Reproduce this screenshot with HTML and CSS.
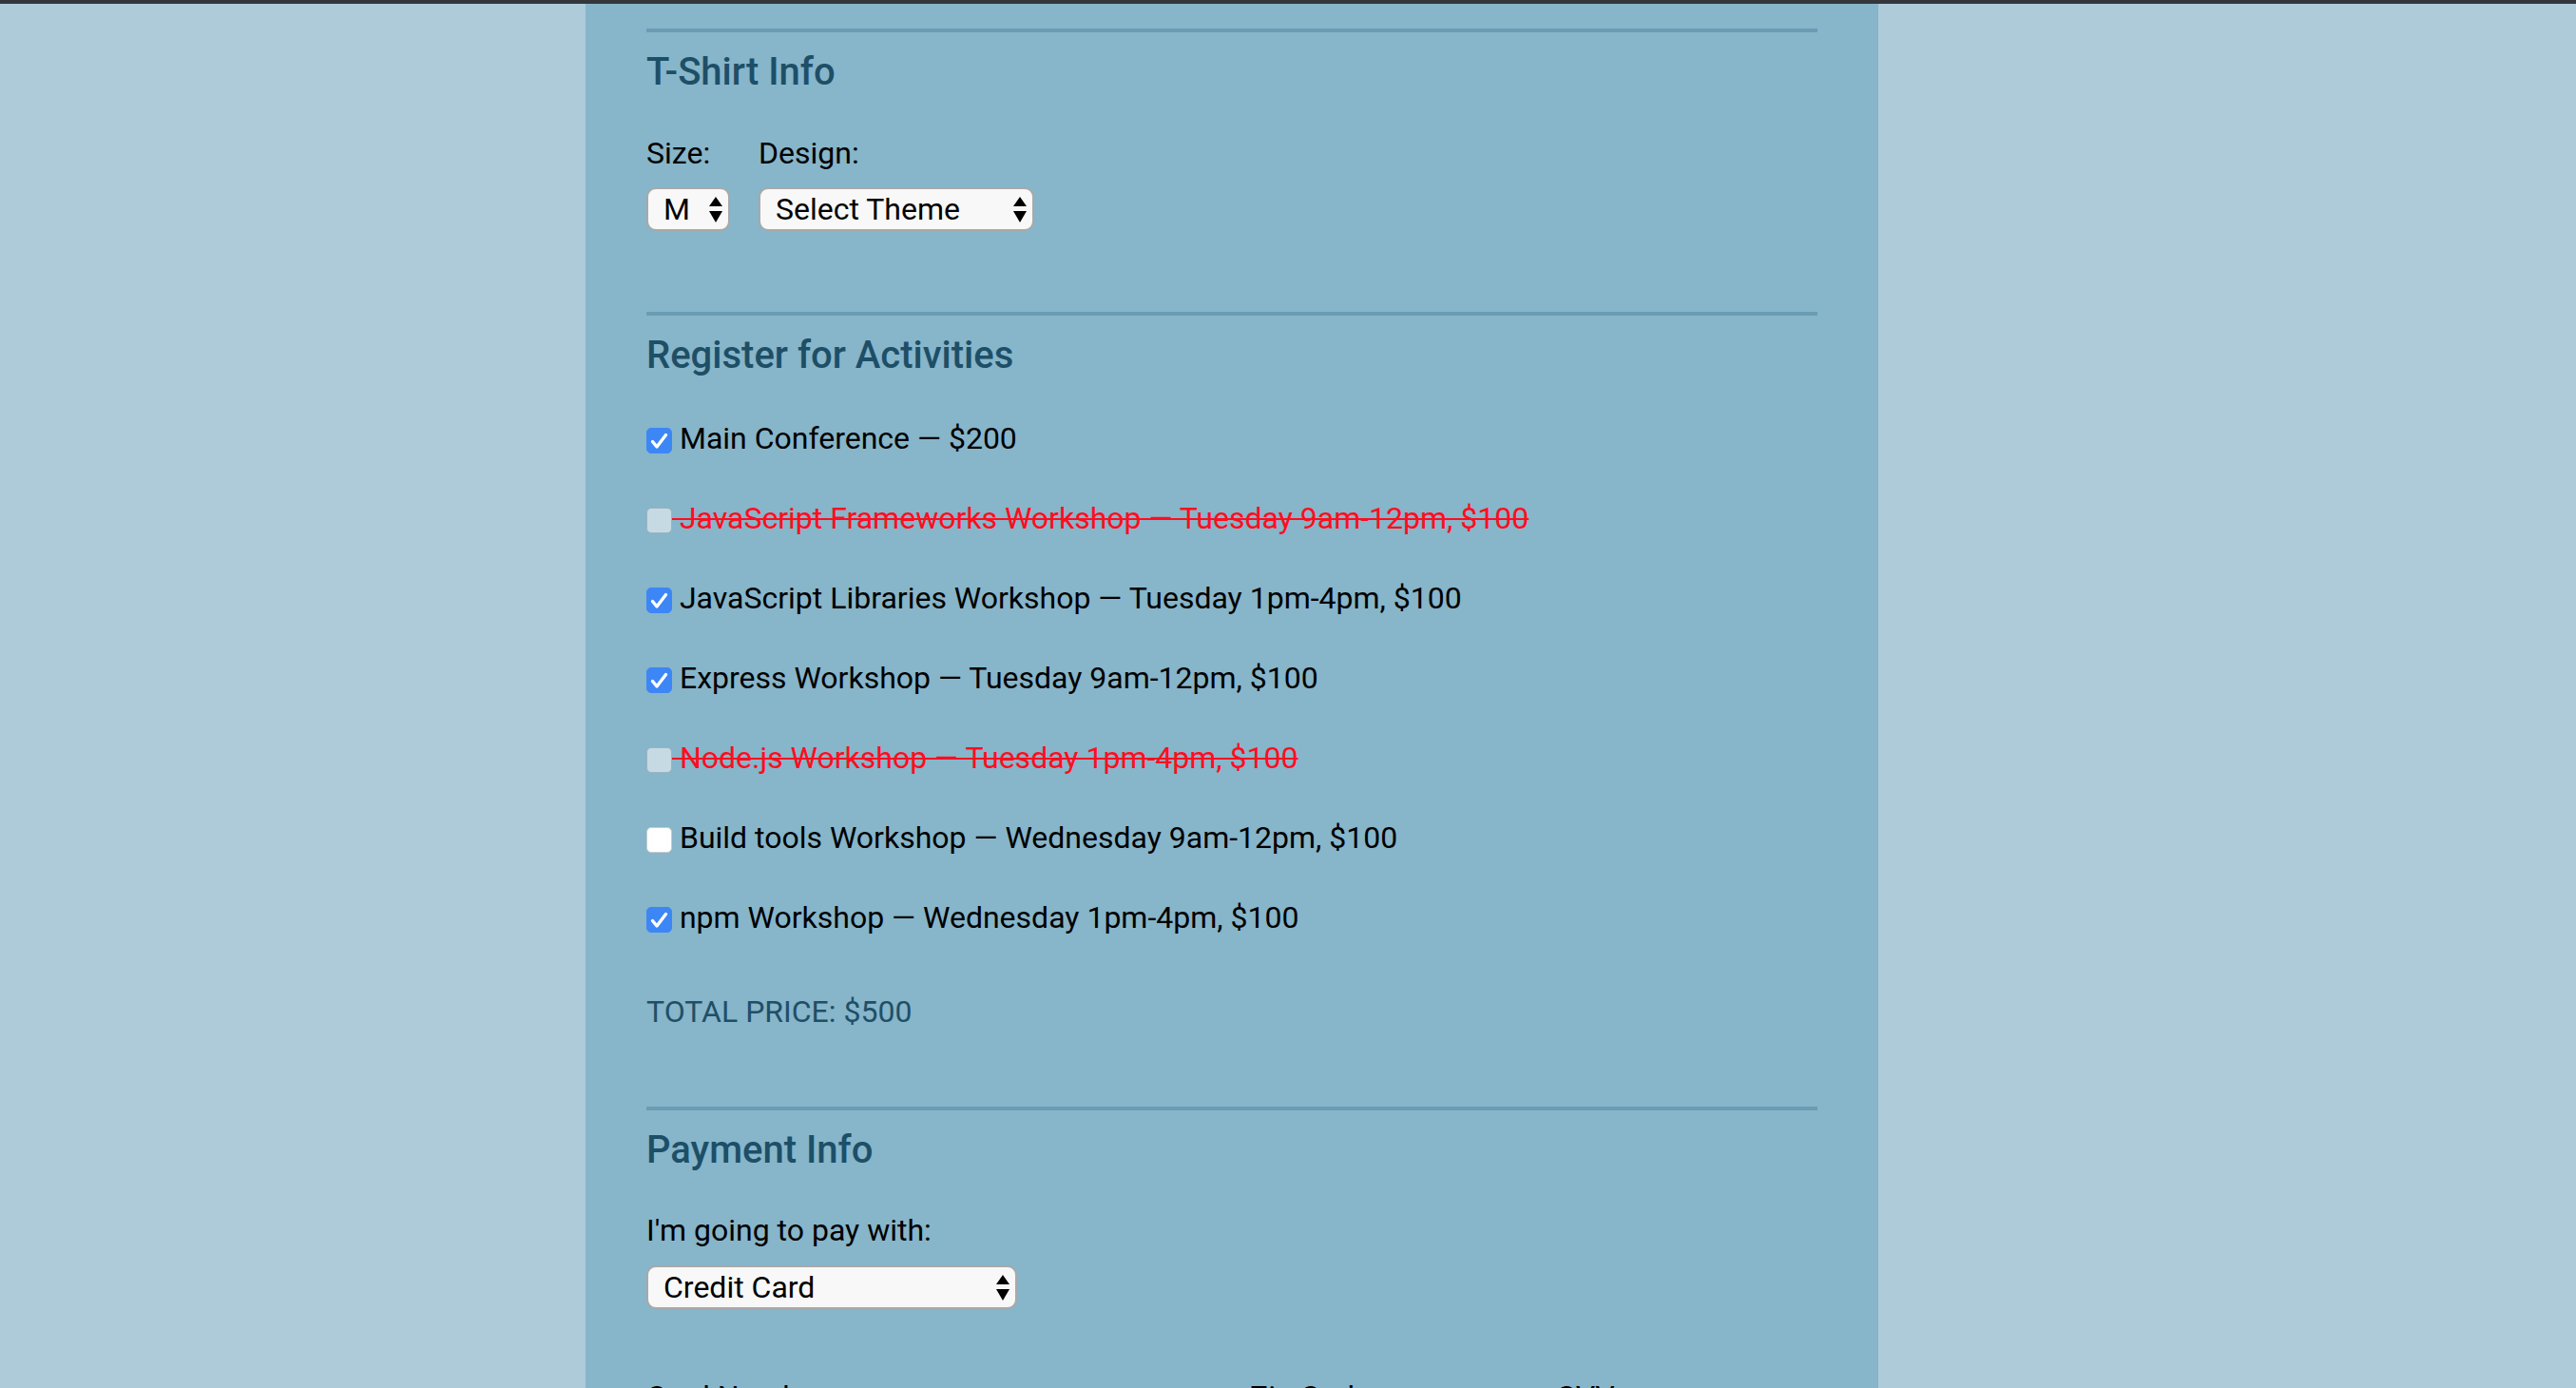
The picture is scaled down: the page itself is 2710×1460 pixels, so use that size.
FILE: index.html
```html
<!DOCTYPE html>
<html lang="en">
<head>
<meta charset="utf-8">
<title>Conference Registration</title>
<link rel="stylesheet" href="styles.css">
</head>
<body>
<div class="topbar"></div>
<main class="page">
  <form class="form">
    <section class="group">
      <h2 class="group-title">T-Shirt Info</h2>
      <div class="shirt-row">
        <div class="field">
          <label class="field-label" for="size">Size:</label>
          <div class="select-wrap select-size">
            <select id="size" class="select"><option>M</option></select>
            <svg class="select-arrows" viewBox="0 0 14 28" width="14" height="28"><polygon points="0,10 7,0 14,10"/><polygon points="0,15 14,15 7,27"/></svg>
          </div>
        </div>
        <div class="field">
          <label class="field-label" for="design">Design:</label>
          <div class="select-wrap select-design">
            <select id="design" class="select"><option>Select Theme</option></select>
            <svg class="select-arrows" viewBox="0 0 14 28" width="14" height="28"><polygon points="0,10 7,0 14,10"/><polygon points="0,15 14,15 7,27"/></svg>
          </div>
        </div>
      </div>
    </section>

    <section class="group group-activities">
      <h2 class="group-title">Register for Activities</h2>
      <div class="activities">
        <label class="activity"><span class="cb cb-checked"><svg viewBox="0 0 27 27" width="27" height="27"><path d="M6.5 14.5 L11 20 L20.5 7.5"/></svg></span> Main Conference — $200</label>
        <label class="activity activity-disabled"><span class="cb cb-disabled"></span> JavaScript Frameworks Workshop — Tuesday 9am-12pm, $100</label>
        <label class="activity"><span class="cb cb-checked"><svg viewBox="0 0 27 27" width="27" height="27"><path d="M6.5 14.5 L11 20 L20.5 7.5"/></svg></span> JavaScript Libraries Workshop — Tuesday 1pm-4pm, $100</label>
        <label class="activity"><span class="cb cb-checked"><svg viewBox="0 0 27 27" width="27" height="27"><path d="M6.5 14.5 L11 20 L20.5 7.5"/></svg></span> Express Workshop — Tuesday 9am-12pm, $100</label>
        <label class="activity activity-disabled"><span class="cb cb-disabled"></span> Node.js Workshop — Tuesday 1pm-4pm, $100</label>
        <label class="activity"><span class="cb"></span> Build tools Workshop — Wednesday 9am-12pm, $100</label>
        <label class="activity"><span class="cb cb-checked"><svg viewBox="0 0 27 27" width="27" height="27"><path d="M6.5 14.5 L11 20 L20.5 7.5"/></svg></span> npm Workshop — Wednesday 1pm-4pm, $100</label>
      </div>
      <p class="total">TOTAL PRICE: $500</p>
    </section>

    <section class="group">
      <h2 class="group-title">Payment Info</h2>
      <div class="pay-row">
        <label class="field-label" for="payment">I'm going to pay with:</label>
        <div class="select-wrap select-payment">
          <select id="payment" class="select"><option>Credit Card</option></select>
          <svg class="select-arrows" viewBox="0 0 14 28" width="14" height="28"><polygon points="0,10 7,0 14,10"/><polygon points="0,15 14,15 7,27"/></svg>
        </div>
      </div>
      <div class="card-row">
        <div class="card-field"><label class="field-label" for="cc">Card Number:</label><input id="cc" class="text-input" type="text"></div>
        <div class="card-field"><label class="field-label" for="zip">Zip Code:</label><input id="zip" class="text-input" type="text"></div>
        <div class="card-field"><label class="field-label" for="cvv">CVV:</label><input id="cvv" class="text-input" type="text"></div>
      </div>
    </section>
  </form>
</main>
</body>
</html>
```

FILE: styles.css
```css
html, body {
  margin: 0;
  padding: 0;
}

body {
  background: #aecbd9;
  font-family: Roboto, "Liberation Sans", sans-serif;
  font-size: 32px;
  color: #000;
  overflow: hidden;
  height: 1460px;
}

.topbar {
  height: 4px;
  background: #33373b;
}

.page {
  margin-left: 616px;
  width: 1360px;
  box-sizing: border-box;
  padding: 26px 64px 0;
  background: #87b5ca;
  min-height: 1456px;
}

.form {
  display: block;
}

.group {
  border-top: 4px solid #6a9db4;
  padding-top: 18px;
}

.group + .group {
  margin-top: 85px;
}

.group-activities + .group {
  margin-top: 80px;
}

.group-title {
  margin: 0;
  font-size: 40px;
  line-height: 48px;
  font-weight: 500;
  color: #1d4f67;
}

.shirt-row {
  display: flex;
  gap: 30px;
  margin-top: 41px;
}

.field-label {
  display: block;
  line-height: 40px;
  margin-bottom: 16px;
}

.select-wrap {
  position: relative;
  height: 46px;
}

.select-size { width: 88px; }
.select-design { width: 290px; }
.select-payment { width: 390px; }

.select {
  appearance: none;
  -webkit-appearance: none;
  display: block;
  width: 100%;
  height: 46px;
  box-sizing: border-box;
  margin: 0;
  padding: 0 30px 0 16px;
  border: 2px solid #a9a9a9;
  border-radius: 10px;
  background: #f8f8f8;
  font-family: Roboto, "Liberation Sans", sans-serif;
  font-size: 32px;
  color: #000;
}

.select-arrows {
  position: absolute;
  right: 8px;
  top: 10px;
  fill: #000;
  pointer-events: none;
}

.activities {
  margin-top: 43px;
}

.activity {
  display: block;
  line-height: 40px;
  margin-bottom: 44px;
  white-space: nowrap;
}

.activity:last-child {
  margin-bottom: 0;
}

.activity-disabled {
  color: #ff0d1f;
  text-decoration: line-through;
  text-decoration-thickness: 2px;
}

.cb {
  display: inline-block;
  width: 27px;
  height: 27px;
  box-sizing: border-box;
  vertical-align: -5px;
  border-radius: 5px;
  background: #ffffff;
  border: 1px solid #c3ccd1;
}

.cb svg {
  display: block;
  margin: -1px;
  fill: none;
  stroke: #fff;
  stroke-width: 3.4;
  stroke-linecap: round;
  stroke-linejoin: round;
}

.cb-checked {
  background: #3c86f6;
  border-color: #3c86f6;
}

.cb-disabled {
  background: #c6dae3;
  border: 1px solid #9bb3c0;
}

.total {
  margin: 59px 0 0;
  line-height: 40px;
  color: #1f4f66;
}

.pay-row {
  margin-top: 40px;
}

.pay-row .field-label {
  margin-bottom: 17px;
}

.card-row {
  display: grid;
  grid-template-columns: 635px 322px 1fr;
  margin-top: 72px;
}

.card-field .field-label {
  margin-bottom: 10px;
}

.text-input {
  display: block;
  width: 90%;
  height: 46px;
  box-sizing: border-box;
  border: 2px solid #a9a9a9;
  border-radius: 6px;
  font-size: 32px;
  font-family: Roboto, "Liberation Sans", sans-serif;
}
```
